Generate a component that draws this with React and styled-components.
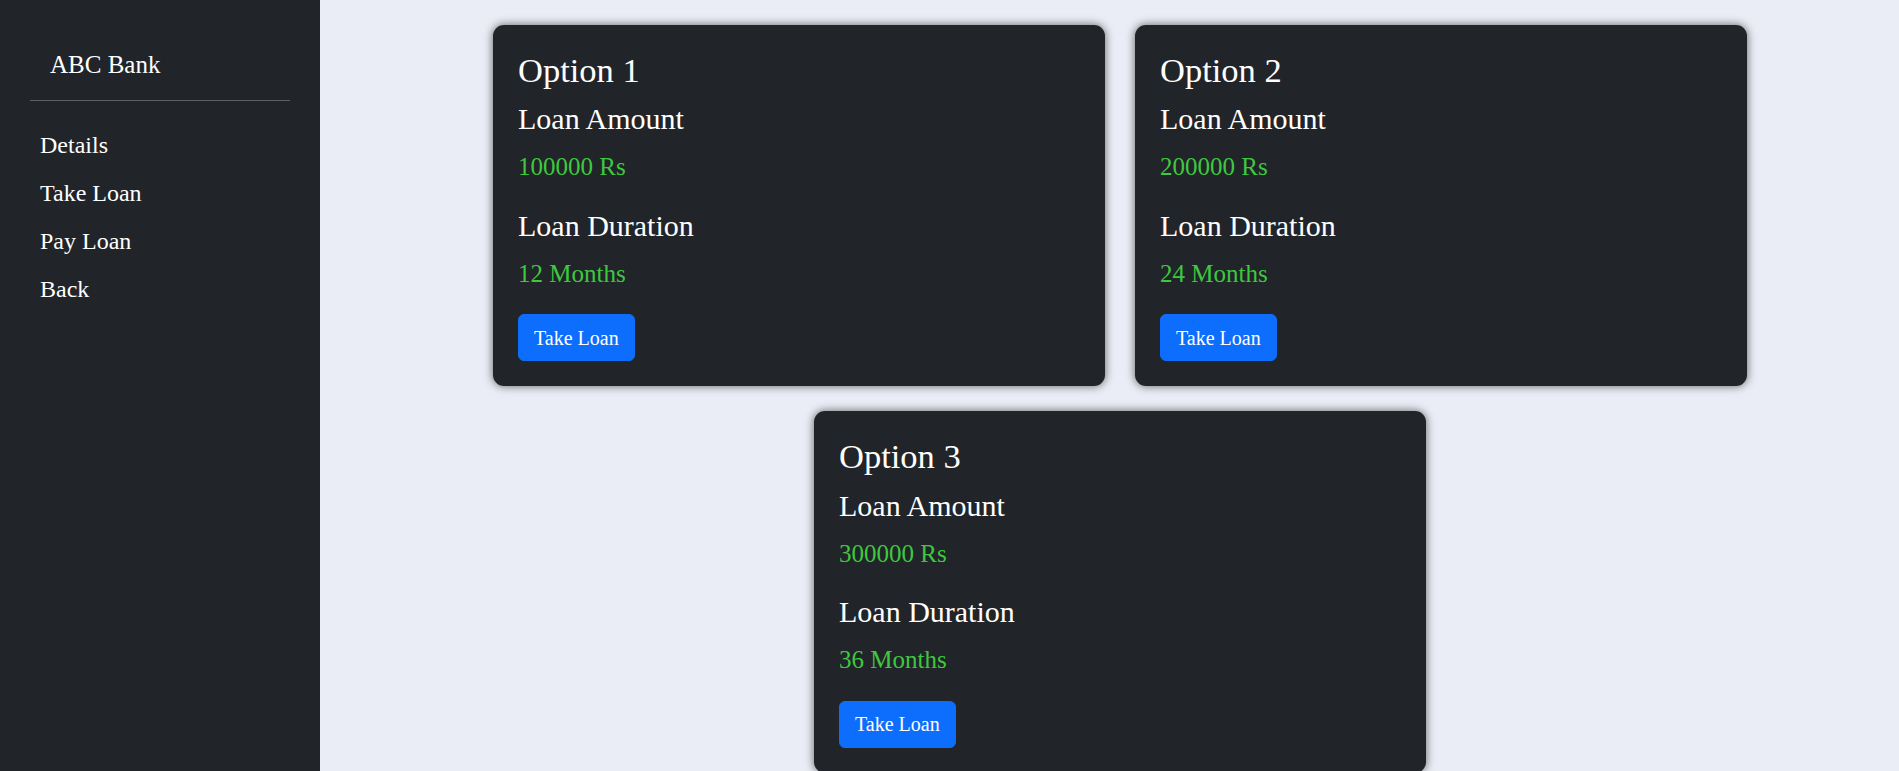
import React from "react";
import styled, { createGlobalStyle } from "styled-components";

const GlobalStyle = createGlobalStyle`
  * {
    box-sizing: border-box;
  }
  body {
    margin: 0;
    font-family: "Liberation Serif", "Times New Roman", serif;
    background-color: #eaedf5;
  }
`;

const Layout = styled.div`
  display: flex;
  min-height: 100vh;
`;

const Sidebar = styled.aside`
  width: 320px;
  flex-shrink: 0;
  background-color: #212529;
  padding: 46px 30px 0;
  color: #ffffff;
`;

const Brand = styled.div`
  font-size: 25px;
  line-height: 1.5;
  padding-left: 20px;
`;

const Divider = styled.hr`
  border: none;
  border-top: 1px solid #5c5f63;
  margin: 16px 0 20px;
`;

const NavList = styled.nav`
  display: flex;
  flex-direction: column;
`;

const NavLink = styled.a`
  font-size: 24px;
  line-height: 1.5;
  padding: 6px 10px;
  color: #ffffff;
  text-decoration: none;
  cursor: pointer;
`;

const Main = styled.main`
  flex: 1;
  display: flex;
  flex-wrap: wrap;
  justify-content: center;
  align-content: flex-start;
  gap: 25px 30px;
  padding: 25px 0 0 21px;
`;

const Card = styled.div`
  width: 612px;
  background-color: #212529;
  border-radius: 11px;
  box-shadow: 0 0 10px rgba(0, 0, 0, 0.6);
  padding: 25px 25px 25px;
  color: #ffffff;
`;

const Title = styled.h2`
  font-size: 34.5px;
  font-weight: 400;
  line-height: 1.2;
  margin: 0 0 10px;
`;

const Label = styled.h4`
  font-size: 30px;
  font-weight: 400;
  line-height: 1.2;
  margin: 0 0 11px;
`;

const Value = styled.p`
  font-size: 25px;
  line-height: 1.5;
  color: #3ec83e;
  margin: 0 0 22px;
`;

const Button = styled.button`
  font-family: inherit;
  font-size: 20px;
  line-height: 1.5;
  padding: 7.5px 15px;
  border: 1px solid #0d6efd;
  border-radius: 6px;
  background-color: #0d6efd;
  color: #ffffff;
  cursor: pointer;
`;

const options = [
  { id: 1, amount: "100000 Rs", duration: "12 Months" },
  { id: 2, amount: "200000 Rs", duration: "24 Months" },
  { id: 3, amount: "300000 Rs", duration: "36 Months" },
];

const App = () => {
  return (
    <>
      <GlobalStyle />
      <Layout>
        <Sidebar>
          <Brand>ABC Bank</Brand>
          <Divider />
          <NavList>
            <NavLink>Details</NavLink>
            <NavLink>Take Loan</NavLink>
            <NavLink>Pay Loan</NavLink>
            <NavLink>Back</NavLink>
          </NavList>
        </Sidebar>
        <Main>
          {options.map((o) => (
            <Card key={o.id}>
              <Title>Option {o.id}</Title>
              <Label>Loan Amount</Label>
              <Value>{o.amount}</Value>
              <Label>Loan Duration</Label>
              <Value>{o.duration}</Value>
              <Button>Take Loan</Button>
            </Card>
          ))}
        </Main>
      </Layout>
    </>
  );
};

export default App;
